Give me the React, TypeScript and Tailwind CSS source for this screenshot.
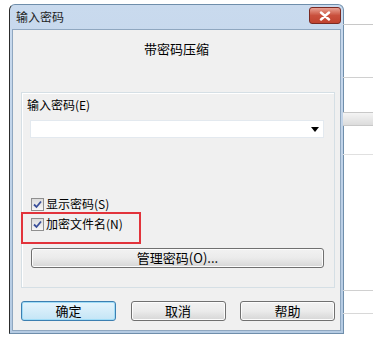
import React from 'react';

const font = { fontFamily: '"Noto Sans CJK SC", "Liberation Sans", sans-serif' };

const CheckMark = () => (
  <span className="w-[13px] h-[13px] border border-[#8f8f8f] bg-gradient-to-b from-[#dcdcdc] to-[#f6f6f6] flex items-center justify-center shrink-0">
    <svg width="9" height="9" viewBox="0 0 9 9">
      <path d="M1 4.5 L3.5 7 L8 1.5" fill="none" stroke="#3a4f9a" strokeWidth="1.8" />
    </svg>
  </span>
);

const Button: React.FC<{ label: string; primary?: boolean; className?: string }> = ({ label, primary, className }) => (
  <div
    className={
      'h-[20px] rounded-[3px] border flex items-center justify-center text-[13px] text-black ' +
      (primary
        ? 'border-[#3c7fb1] bg-gradient-to-b from-[#e5f4fc] to-[#c4e5f6] shadow-[inset_0_0_0_1px_#9fdcf7] '
        : 'border-[#707070] bg-gradient-to-b from-[#f2f2f2] via-[#ebebeb] to-[#d6d6d6] shadow-[inset_0_0_0_1px_#fcfcfc] ') +
      (className ?? '')
    }
  >
    {label}
  </div>
);

export default function App() {
  return (
    <div className="relative w-[373px] h-[344px] bg-white overflow-hidden" style={font}>
      {/* window behind, right edge */}
      <div className="absolute left-[343px] top-[24px] w-[30px] h-px bg-[#c8c8c8]" />
      <div className="absolute left-[343px] top-[77px] w-[30px] h-px bg-[#d0d0d0]" />
      <div className="absolute left-[343px] top-[112px] w-[30px] h-[14px] bg-gradient-to-b from-[#f4f4f4] to-[#dcdcdc] border-y border-[#c8c8c8]" />
      <div className="absolute left-[343px] top-[154px] w-[30px] h-px bg-[#e0e0e0]" />
      <div className="absolute left-[343px] top-[290px] w-[30px] h-px bg-[#d0d0d0]" />
      <div className="absolute left-[343px] top-[313px] w-[30px] h-px bg-[#d8d8d8]" />

      <div className="pt-[4px] pl-[9px]">
        <div className="w-[335px] h-[330px] flex flex-col rounded-t-[6px] border border-[#6f8eab] border-l-[#2c2c2c] bg-gradient-to-b from-[#c9daee] to-[#b5cbe3]">
          {/* title bar */}
          <div className="h-[24px] flex items-center justify-between pl-[6px] pr-[2px] shrink-0">
            <span className="text-[12px] text-[#1e1e1e]">输入密码</span>
            <div className="w-[32px] h-[17px] mb-[3px] rounded-[3px] border border-[#7a2a22] bg-gradient-to-b from-[#e8a093] via-[#c9503d] to-[#c0422f] flex items-center justify-center">
              <svg width="12" height="10" viewBox="0 0 12 10">
                <path d="M2 1.5 L10 8.5 M10 1.5 L2 8.5" stroke="#fff" strokeWidth="2.4" strokeLinecap="round" />
              </svg>
            </div>
          </div>

          {/* client */}
          <div className="flex-1 mx-[2px] mb-[2px] bg-[#f0f0f0] border border-[#8fa7c0] flex flex-col">
            <div className="h-[28px] flex items-end justify-center text-[13px] text-black">带密码压缩</div>

            <div className="relative mt-[34px] ml-[8px] mr-[5px] h-[196px] border border-[#d5dfe5] shadow-[inset_1px_1px_0_#ffffff] flex flex-col">
              <div className="pl-[5px] pt-[4px] text-[12px] leading-[16px] text-black">输入密码(E)</div>
              <div className="ml-[8px] mr-[10px] mt-[7px] h-[18px] bg-white border border-[#e3e9ef] flex items-center justify-end pr-[4px]">
                <svg width="8" height="5" viewBox="0 0 8 5">
                  <path d="M0 0 H8 L4 5 Z" fill="#000" />
                </svg>
              </div>

              <div className="mt-[58px] ml-[9px] flex items-center gap-[2px] h-[16px] text-[12px] text-black">
                <CheckMark />
                <span>显示密码(S)</span>
              </div>
              <div className="mt-[4px] ml-[9px] flex items-center gap-[2px] h-[16px] text-[12px] text-black">
                <CheckMark />
                <span>加密文件名(N)</span>
              </div>

              <Button label="管理密码(O)..." className="mt-[16px] ml-[9px] mr-[10px] h-[20px]" />

              <div className="absolute left-[-1px] top-[119px] w-[120px] h-[32px] border-2 border-[#e2333b]" />
            </div>

            <div className="mt-[13px] ml-[8px] mr-[5px] flex justify-between">
              <Button label="确定" primary className="w-[95px]" />
              <Button label="取消" className="w-[95px]" />
              <Button label="帮助" className="w-[95px]" />
            </div>
          </div>
        </div>
      </div>
    </div>
  );
}
